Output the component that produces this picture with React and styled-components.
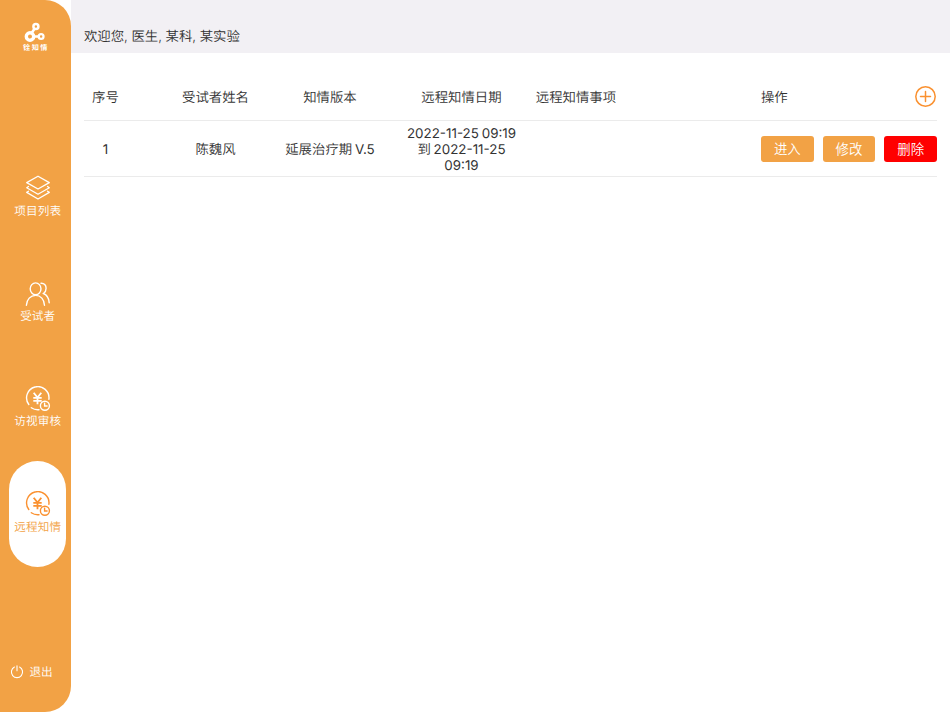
import React from 'react'
import styled, { createGlobalStyle } from 'styled-components'

const orange = '#f2a245'
const iconOrange = '#fa9130'

const GlobalStyle = createGlobalStyle`
  * {
    box-sizing: border-box;
  }
  body {
    margin: 0;
    background: #fff;
    color: #333;
    font-family: Inter, 'Noto Sans CJK SC', sans-serif;
    font-size: 13.4px;
    font-weight: 350;
    text-rendering: geometricPrecision;
  }
`

const Page = styled.div`
  display: flex;
  width: 950px;
  height: 712px;
  overflow: hidden;
`

const Sidebar = styled.nav`
  display: flex;
  flex-direction: column;
  flex: none;
  width: 70.6px;
  background: ${orange};
  border-radius: 0 26px 26px 0;
`

const Brand = styled.div`
  display: flex;
  flex-direction: column;
  align-items: center;
  height: 145.3px;
  padding-top: 22px;
  color: #fff;
`

const BrandName = styled.span`
  font-size: 7.2px;
  font-weight: 700;
  line-height: 10px;
  letter-spacing: 1.4px;
  margin-right: -1.4px;
`

const NavItem = styled.a`
  display: flex;
  flex-direction: column;
  align-items: center;
  width: 57.4px;
  height: 105.4px;
  margin-left: 9px;
  padding-top: 30px;
  border-radius: 29px;
  background: ${props => (props.$active ? '#fff' : 'transparent')};
  color: ${props => (props.$active ? orange : '#fff')};
`

const NavLabel = styled.span`
  font-size: 11.6px;
  line-height: 16px;
  margin-top: 1.3px;
  letter-spacing: 0.1px;
  white-space: nowrap;
`

const Logout = styled.a`
  display: flex;
  align-items: center;
  gap: 5.5px;
  height: 16px;
  margin: auto 0 32px 10px;
  color: #fff;
  font-size: 11.6px;
`

const Main = styled.main`
  flex: 1;
`

const TopBar = styled.header`
  height: 53px;
  padding: 27px 0 0 13.4px;
  background: #f2f0f4;
  line-height: 20px;
  letter-spacing: -0.05px;
`

const Table = styled.section`
  margin: 20px 13.4px 0 13.4px;
`

const Row = styled.div`
  display: grid;
  grid-template-columns: 43px 146px 114px 131px 115px 128px 176px;
  align-items: center;
  height: ${props => (props.$head ? 48 : 56)}px;
  border-bottom: 1px solid #ebebeb;
  line-height: 15.7px;
  word-spacing: -1px;
`

const Cell = styled.div`
  padding-top: 4.4px;
  padding-left: ${props => props.$indent || 0}px;
  text-align: center;
  white-space: nowrap;
`

// latin and digits read too thin at the body weight
const Latin = styled.span`
  font-weight: 400;
`

const Actions = styled.div`
  display: flex;
  grid-column: 7;
  align-items: center;
  justify-content: space-between;
`

const ActionsTitle = styled.span`
  padding-top: 4.4px;
`

const Button = styled.button`
  width: 52.7px;
  height: 26.4px;
  margin-top: 0.6px;
  padding: 2px 0 0;
  border: 0;
  border-radius: 3px;
  background: ${props => (props.$danger ? '#ff0000' : orange)};
  color: #fff;
  font: inherit;
`

const Logo = () => (
  <svg width="22" height="21" viewBox="0 0 22 21" fill="none" stroke="#fff">
    <path d="M12 4.500 7 12M6.5 14.5h9" strokeWidth="2.6" />
    <circle cx="11.9" cy="4.4" r="2.5" strokeWidth="2.5" fill={orange} />
    <circle cx="6" cy="14.5" r="3.7" strokeWidth="3.4" fill={orange} />
    <circle cx="17.100" cy="14.5" r="2.4" strokeWidth="2.3" fill={orange} />
  </svg>
)

const LayersIcon = () => (
  <svg
    width="26"
    height="26"
    viewBox="0 0 26 26"
    fill="none"
    stroke="#fff"
    strokeWidth="1.3"
    strokeLinejoin="round"
    strokeLinecap="round"
  >
    <path d="M13 1.2 24.3 7.6 13 14 1.7 7.6z" />
    <path d="M3.5 11.5 1.7 12.7 13 19.2l11.3-6.5-1.8-1.2" />
    <path d="M3.5 16.2 1.7 17.4 13 24l11.3-6.6-1.8-1.2" />
  </svg>
)

const PeopleIcon = () => (
  <svg
    width="26"
    height="26"
    viewBox="0 0 26 26"
    fill="none"
    stroke="#fff"
    strokeWidth="1.4"
    strokeLinecap="round"
  >
    <ellipse cx="10.6" cy="7.8" rx="5.4" ry="5.9" />
    <path d="M1.400 24.2c.3-5.8 4.100-9.8 9.200-9.8s8.600 4 8.900 9.800" />
    <path d="M16 2.200c3.200-.2 5.100 2.100 5.100 5 0 2.300-.9 4-2.600 5.300 3.500 1.500 5.400 4.700 5.700 9.200" />
  </svg>
)

const YenClockIcon = ({ color = '#fff' }) => (
  <svg
    width="26"
    height="26"
    viewBox="0 0 26 26"
    fill="none"
    stroke={color}
    strokeWidth="1.4"
    strokeLinecap="round"
  >
    <path d="M3.800 18.500A11.200 11.200 0 1 1 23.900 13.200" />
    <path d="M6.300 21.700A11.200 11.200 0 0 0 13 23.700h1" />
    <path
      d="m8.700 6.700 3.800 4.900 3.800-4.900M12.500 11.600v6.600M8.300 11.800h8.400M8.300 14.800h8.400"
      strokeWidth="1.8"
      strokeLinecap="butt"
    />
    <circle cx="19.900" cy="19.700" r="4.500" />
    <path d="M19.600 17.300v2.700h2.500" />
  </svg>
)

const PowerIcon = () => (
  <svg
    width="14"
    height="14"
    viewBox="0 0 14 14"
    fill="none"
    stroke="#fff"
    strokeWidth="1.1"
    strokeLinecap="round"
  >
    <path d="M4.400 2.100a5.600 5.600 0 1 0 5.200 0M7 .8v5" />
  </svg>
)

const AddIcon = styled.svg`
  display: block;
  margin-left: auto;
`

const navItems = [
  { label: '项目列表', icon: <LayersIcon /> },
  { label: '受试者', icon: <PeopleIcon /> },
  { label: '访视审核', icon: <YenClockIcon /> },
  { label: '远程知情', icon: <YenClockIcon color={iconOrange} />, active: true },
]

const App = () => (
  <Page>
    <GlobalStyle />
    <Sidebar>
      <Brand>
        <Logo />
        <BrandName>铨知情</BrandName>
      </Brand>
      {navItems.map(item => (
        <NavItem key={item.label} $active={item.active}>
          {item.icon}
          <NavLabel>{item.label}</NavLabel>
        </NavItem>
      ))}
      <Logout>
        <PowerIcon />
        退出
      </Logout>
    </Sidebar>
    <Main>
      <TopBar>欢迎您, 医生, 某科, 某实验</TopBar>
      <Table>
        <Row $head>
          <Cell>序号</Cell>
          <Cell $indent={31}>受试者姓名</Cell>
          <Cell>知情版本</Cell>
          <Cell $indent={18}>远程知情日期</Cell>
          <Cell $indent={1}>远程知情事项</Cell>
          <Actions>
            <ActionsTitle>操作</ActionsTitle>
            <AddIcon
              width="22"
              height="22"
              viewBox="0 0 22 22"
              fill="none"
              stroke={iconOrange}
              strokeWidth="1.5"
              strokeLinecap="round"
            >
              <circle cx="10.500" cy="10.500" r="9.700" />
              <path d="M10.500 5.500v10M5.500 10.500h10" />
            </AddIcon>
          </Actions>
        </Row>
        <Row>
          <Cell>
            <Latin>1</Latin>
          </Cell>
          <Cell $indent={31}>陈魏风</Cell>
          <Cell>
            延展治疗期 <Latin>V.5</Latin>
          </Cell>
          <Cell $indent={18}>
            <Latin>2022-11-25 09:19</Latin>
            <br />到 <Latin>2022-11-25</Latin>
            <br />
            <Latin>09:19</Latin>
          </Cell>
          <Actions>
            <Button>进入</Button>
            <Button>修改</Button>
            <Button $danger>删除</Button>
          </Actions>
        </Row>
      </Table>
    </Main>
  </Page>
)

export default App
